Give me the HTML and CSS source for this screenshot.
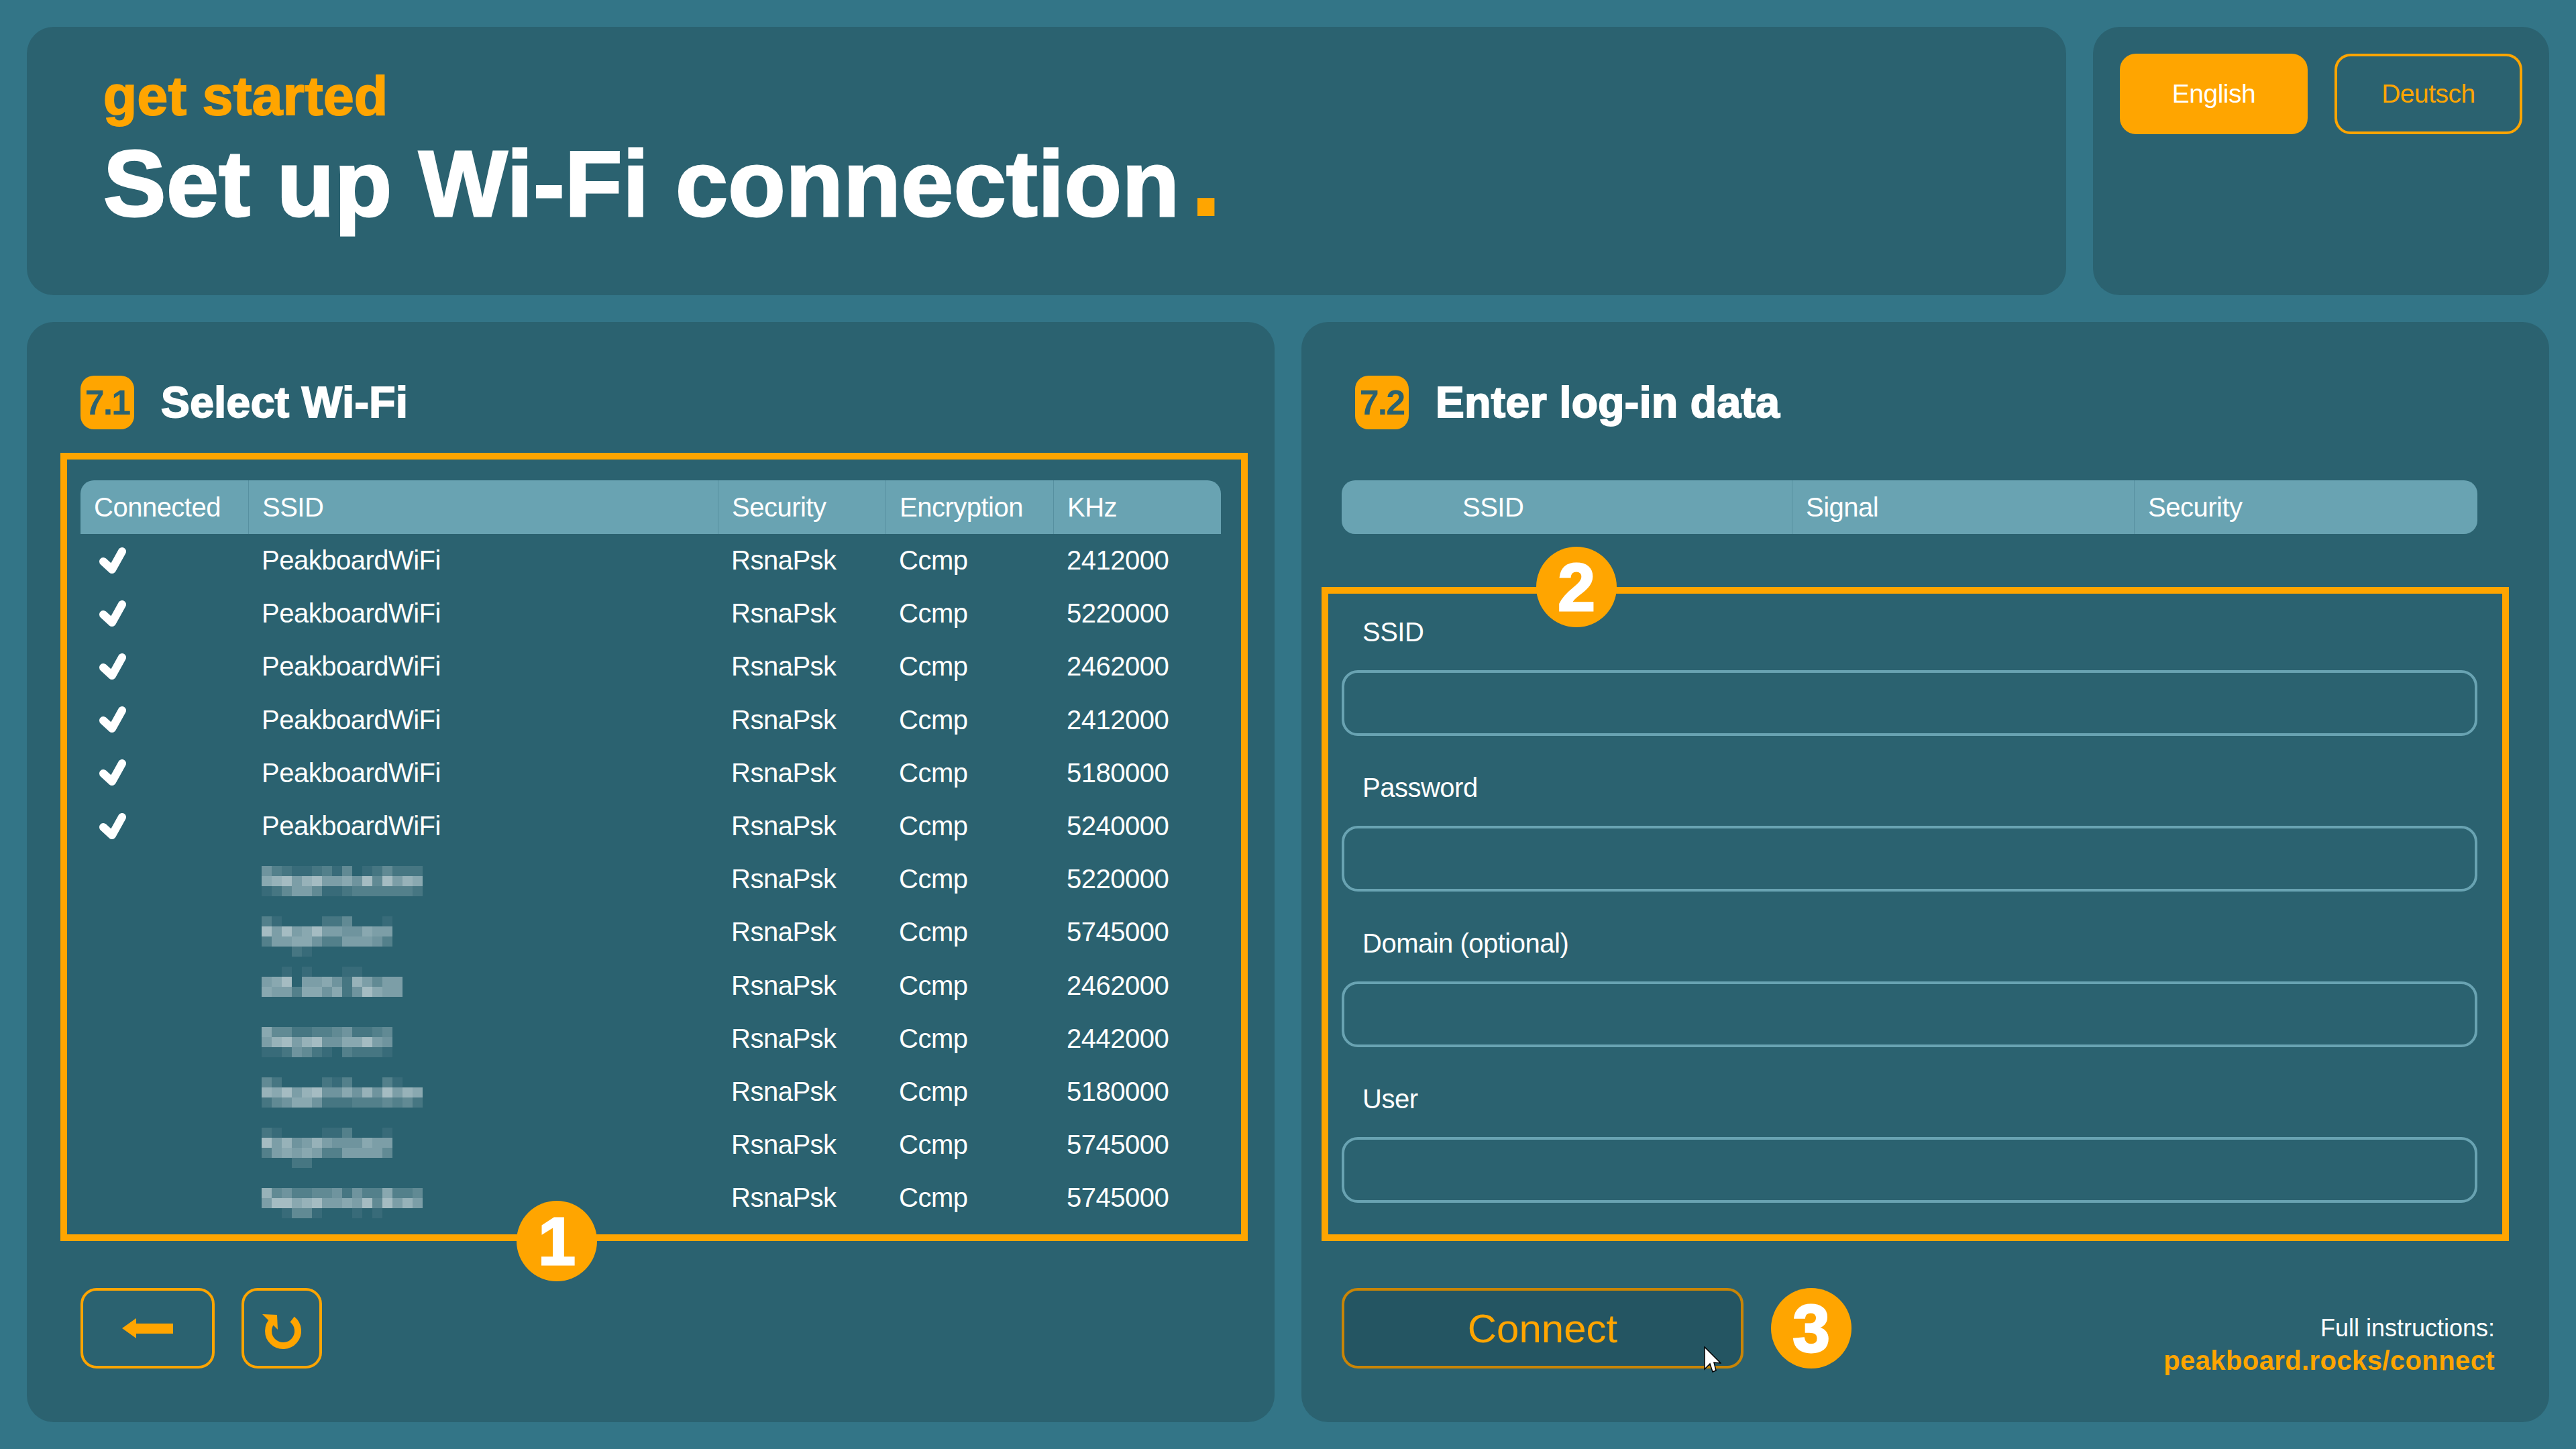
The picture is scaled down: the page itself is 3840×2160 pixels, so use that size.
FILE: index.html
```html
<!DOCTYPE html>
<html>
<head>
	<title>Set up Wi-Fi connection</title>
	<meta charset="utf-8">
	<link rel="stylesheet" href="styles.css">
</head>

<body>
	<div class="row">
		<div class="panel title-panel">
			<p class="kicker">get started</p>
			<h1 class="headline">Set up Wi-Fi connection<span class="dot">.</span></h1>
		</div>
		<div class="panel lang-panel">
			<button class="lang lang-active">English</button>
			<button class="lang">Deutsch</button>
		</div>
	</div>

	<div class="row">
		<div class="panel half half-list">
			<div class="section-head">
				<span class="badge">7.1</span>
				<h2 class="section-title">Select Wi-Fi</h2>
			</div>
			<div class="frame frame-list">
				<table class="wifi-table">
					<thead>
						<tr>
							<th class="col-connected">Connected</th>
							<th class="col-ssid">SSID</th>
							<th class="col-security">Security</th>
							<th class="col-encryption">Encryption</th>
							<th class="col-khz">KHz</th>
						</tr>
					</thead>
					<tbody id="wifiRows"></tbody>
				</table>
				<span class="step step-list">1</span>
			</div>
			<div class="foot">
				<button class="outline back-button">
					<svg class="back-icon" viewBox="0 0 76 30"><polygon points="0,15 21,0 21,8 76,8 76,23 21,23 21,30"/></svg>
				</button>
				<button class="outline reload-button">
					<svg class="reload-icon" viewBox="0 0 112 112">
						<path class="reload-ring" d="M71.6 42.7A22 22 0 1 1 43 44"/>
						<polygon points="27,35 49,36 50,58"/>
					</svg>
				</button>
			</div>
		</div>

		<div class="panel half half-form">
			<div class="section-head section-head-right">
				<span class="badge">7.2</span>
				<h2 class="section-title">Enter log-in data</h2>
			</div>
			<table class="signal-table">
				<thead>
					<tr>
						<th class="col-name">SSID</th>
						<th class="col-signal">Signal</th>
						<th>Security</th>
					</tr>
				</thead>
			</table>
			<div class="frame frame-form">
				<span class="step step-form">2</span>
				<div class="field">
					<label class="field-label">SSID</label>
					<input class="field-input" type="text">
				</div>
				<div class="field">
					<label class="field-label">Password</label>
					<input class="field-input" type="password">
				</div>
				<div class="field">
					<label class="field-label">Domain (optional)</label>
					<input class="field-input" type="text">
				</div>
				<div class="field">
					<label class="field-label">User</label>
					<input class="field-input" type="text">
				</div>
			</div>
			<div class="foot foot-right">
				<button class="outline connect-button">Connect
					<svg class="cursor" viewBox="0 0 26 40"><polygon points="1,1 1,34 9,26 13,38 18,36 15,24 25,25"/></svg>
				</button>
				<span class="step">3</span>
				<div class="instructions">
					<p class="instructions-text">Full instructions:</p>
					<p class="instructions-link">peakboard.rocks/connect</p>
				</div>
			</div>
		</div>
	</div>

	<script src="app.js"></script>
</body>
</html>
```

FILE: styles.css
```css
html, body
{
	margin: 0px;
	padding: 0px;
}

body
{
	box-sizing: border-box;
	height: 2160px;
	padding: 40px;
	background: #337587;
	color: white;
	font-family: "Liberation Sans", Arial, sans-serif;
	font-size: 40px;
	letter-spacing: -0.5px;
}

p, h1, h2 {margin: 0px;}

.row
{
	display: flex;
	gap: 40px;
	margin-bottom: 40px;
}

.panel
{
	box-sizing: border-box;
	background: #2B6270;
	border-radius: 40px;
}

/* top row */
.title-panel
{
	flex: 1;
	height: 400px;
	padding: 62px 0px 0px 114px;
}

.kicker
{
	font-size: 82px;
	line-height: 82px;
	font-weight: bold;
	letter-spacing: 0.5px;
	color: #FFA500;
	-webkit-text-stroke: 2px #FFA500;
}

.headline
{
	margin-top: 20px;
	font-size: 140px;
	line-height: 140px;
	letter-spacing: 0.5px;
	-webkit-text-stroke: 3px white;
}

.dot
{
	margin-left: 14px;
	font-size: 180px;
	line-height: 0px;
	color: #FFA500;
	-webkit-text-stroke: 0px;
}

.lang-panel
{
	display: flex;
	gap: 40px;
	width: 680px;
	height: 400px;
	padding: 40px;
}

.lang
{
	width: 280px;
	height: 120px;
	background: transparent;
	border: 4px solid #FFA500;
	border-radius: 24px;
	color: #FFA500;
	font-family: inherit;
	font-size: 39px;
	letter-spacing: -0.5px;
}

.lang-active
{
	background: #FFA500;
	color: white;
}

/* bottom row */
.half
{
	width: 1860px;
	height: 1640px;
	padding-top: 80px;
}

.half-list {padding-left: 50px;}
.half-form {padding-left: 30px;}

.section-head
{
	display: flex;
	align-items: center;
	gap: 40px;
	height: 80px;
	margin-bottom: 35px;
	padding-left: 30px;
}

.section-head-right
{
	margin-bottom: 76px;
	padding-left: 50px;
}

.badge
{
	width: 80px;
	height: 80px;
	background: #FFA500;
	border-radius: 20px;
	color: #2B6270;
	font-size: 52px;
	line-height: 80px;
	font-weight: bold;
	letter-spacing: -2px;
	text-align: center;
}

.section-title
{
	font-size: 64px;
	line-height: 80px;
	letter-spacing: 0.5px;
	-webkit-text-stroke: 2px white;
}

.frame
{
	position: relative;
	box-sizing: border-box;
	width: 1770px;
	border: 10px solid #FFA500;
}

.frame-list
{
	height: 1175px;
	padding: 31px 20px 0px 20px;
}

.frame-form
{
	height: 975px;
	margin-top: 79px;
	padding: 7px 37px 0px 20px;
}

.step
{
	flex: none;
	width: 120px;
	height: 120px;
	background: #FFA500;
	border-radius: 50%;
	color: white;
	font-size: 100px;
	line-height: 120px;
	font-weight: bold;
	letter-spacing: 0px;
	text-align: center;
	-webkit-text-stroke: 3px white;
}

.step-list
{
	position: absolute;
	left: 670px;
	top: 1105px;
}

.step-form
{
	position: absolute;
	left: 310px;
	top: -70px;
}

/* tables */
table
{
	border-collapse: separate;
	border-spacing: 0px;
	table-layout: fixed;
}

th
{
	box-sizing: border-box;
	height: 80px;
	padding: 0px 20px;
	background: #69A3B2;
	font-weight: normal;
	text-align: left;
}

th + th {border-left: 1px solid #5790A0;}

.wifi-table {width: 1700px;}

.wifi-table th:first-child {border-top-left-radius: 20px;}
.wifi-table th:last-child {border-top-right-radius: 20px;}

.col-connected {width: 250px;}
.col-ssid {width: 700px;}
.col-security {width: 250px;}
.col-encryption {width: 250px;}

.wifi-table td
{
	box-sizing: border-box;
	height: 79.2px;
	padding: 0px 20px;
	white-space: nowrap;
}

.check
{
	display: block;
	width: 40px;
	height: 40px;
	margin-left: 8px;
	fill: none;
	stroke: white;
	stroke-width: 12;
	stroke-linecap: round;
	stroke-linejoin: round;
}

.mosaic
{
	display: block;
	width: 240px;
	height: 79px;
	fill: white;
	shape-rendering: crispEdges;
}

.signal-table
{
	width: 1693px;
	margin-left: 30px;
}

.signal-table th:first-child {border-radius: 20px 0px 0px 20px;}
.signal-table th:last-child {border-radius: 0px 20px 20px 0px;}

.signal-table .col-name
{
	width: 671px;
	padding-left: 180px;
}

.col-signal {width: 510px;}

/* form */
.field {margin-bottom: 27px;}

.field-label
{
	display: block;
	height: 100px;
	margin-bottom: 7px;
	padding-left: 31px;
	line-height: 100px;
}

.field-input
{
	display: block;
	box-sizing: border-box;
	width: 100%;
	height: 98px;
	background: transparent;
	border: 4px solid #69A3B2;
	border-radius: 24px;
}

/* buttons under the frames */
.foot
{
	display: flex;
	gap: 40px;
	margin-top: 70px;
	padding-left: 30px;
}

.foot-right
{
	gap: 41px;
	width: 1740px;
}

.outline
{
	box-sizing: border-box;
	height: 120px;
	padding: 0px;
	background: transparent;
	border: 4px solid #FFA500;
	border-radius: 24px;
}

.back-button
{
	display: flex;
	align-items: center;
	justify-content: center;
	width: 200px;
}

.back-icon
{
	width: 76px;
	height: 30px;
	fill: #FFA500;
}

.reload-button {width: 120px;}

.reload-icon
{
	display: block;
	width: 112px;
	height: 112px;
	fill: #FFA500;
}

.reload-ring
{
	fill: none;
	stroke: #FFA500;
	stroke-width: 10;
}

.connect-button
{
	position: relative;
	width: 599px;
	background: #245562;
	border-color: #C98506;
	color: #FFA500;
	font-family: inherit;
	font-size: 60px;
	letter-spacing: 0px;
}

.cursor
{
	position: absolute;
	left: 536px;
	top: 83px;
	width: 26px;
	height: 40px;
	fill: white;
	stroke: black;
	stroke-width: 1.5;
}

.instructions
{
	margin: 37px 21px 0px auto;
	text-align: right;
}

.instructions-text
{
	font-size: 36px;
	line-height: 46px;
	letter-spacing: 0px;
}

.instructions-link
{
	font-size: 40px;
	line-height: 50px;
	font-weight: bold;
	letter-spacing: 0.4px;
	color: #FFA500;
}
```

FILE: app.js
```js
// y = top of the mosaic inside its row, one digit = one 15px tile (0 = nothing, 9 = brightest)
var hidden = [
	{y: 20, rows: ["5321123140124222", "7896896675949687", "1246641123333332"]},
	{y: 16, rows: ["3100002240001", "9696796655766", "3667753366653", "0002100000000"]},
	{y: 11, rows: ["00101000110000", "67906675286466", "76637757259766"]},
	{y: 22, rows: ["7442233452234", "6896895577965", "1125421032221"]},
	{y: 18, rows: ["4200002130003100", "8796895575859687", "2457752223334342"]},
	{y: 14, rows: ["2100001130001", "9685686555766", "3676763366664", "0002200000000"]},
	{y: 25, rows: ["8453344525337334", "6997896676949686", "0014410001010000"]}
]

var networks = [
	[true, 2412000], [true, 5220000], [true, 2462000], [true, 2412000],
	[true, 5180000], [true, 5240000], [false, 5220000], [false, 5745000],
	[false, 2462000], [false, 2442000], [false, 5180000], [false, 5745000],
	[false, 5745000]
]

function mosaic (item)
{
	var rects = ""
	item.rows.forEach(function (row, r)
	{
		row.split("").forEach(function (level, c)
		{
			if (level == "0") return
			rects += "<rect x='" + c * 15 + "' y='" + (item.y + r * 15) + "' width='15' height='15' fill-opacity='" + level * 0.064 + "'/>"
		})
	})
	return "<svg class='mosaic' viewBox='0 0 240 79'>" + rects + "</svg>"
}

var html = ""
networks.forEach(function (net, i)
{
	var check = net[0] ? "<svg class='check' viewBox='0 0 40 40'><path d='M6 21L19 33L34 6'/></svg>" : ""
	var name = net[0] ? "PeakboardWiFi" : mosaic(hidden[i - 6])
	html += "<tr><td>" + check + "</td><td>" + name + "</td><td>RsnaPsk</td><td>Ccmp</td><td>" + net[1] + "</td></tr>"
})
document.getElementById("wifiRows").innerHTML = html
```
